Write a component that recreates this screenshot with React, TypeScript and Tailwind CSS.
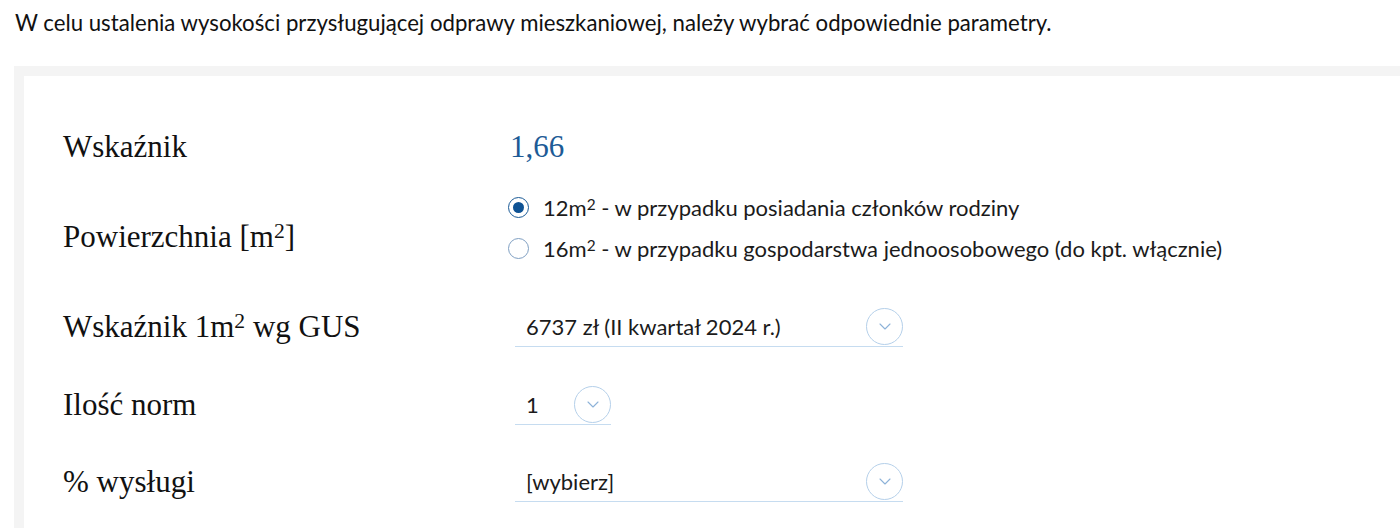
import React, { useState } from 'react';

const serif = { fontFamily: '"Liberation Serif", "DejaVu Serif", serif' };

const Chevron = () => (
  <span className="flex h-[37px] w-[37px] items-center justify-center rounded-full border border-[#b5d0ea] bg-white">
    <svg width="12" height="7" viewBox="0 0 12 7" fill="none">
      <path d="M1 1l5 5 5-5" stroke="#8db2d8" strokeWidth="1.1" strokeLinecap="round" strokeLinejoin="round" />
    </svg>
  </span>
);

const Select = ({ value, width }: { value: string; width: string }) => (
  <div className={`flex h-[40px] items-center justify-between border-b border-[#c6dcf0] pl-[11px] ${width}`}>
    <span className="text-[22px] text-[#1b1b1b]">{value}</span>
    <Chevron />
  </div>
);

const Radio = ({ checked, onClick, children }: { checked: boolean; onClick: () => void; children: React.ReactNode }) => (
  <button type="button" onClick={onClick} className="flex h-[41px] items-center gap-[14px] text-left">
    <span
      className={`flex h-[21px] w-[21px] items-center justify-center rounded-full border ${
        checked ? 'border-[#1a5a96]' : 'border-[#7f9fc2]'
      }`}
    >
      {checked && <span className="h-[11px] w-[11px] rounded-full bg-[#0e5294]" />}
    </span>
    <span className="text-[22px] text-[#1b1b1b]">{children}</span>
  </button>
);

const Label = ({ children, className = '' }: { children: React.ReactNode; className?: string }) => (
  <div className={`w-[447px] shrink-0 text-[31px] leading-[40px] text-[#111] ${className}`} style={serif}>
    {children}
  </div>
);

const Sq = () => <sup className="top-[-0.4em] text-[0.7em]">2</sup>;

export default function App() {
  const [area, setArea] = useState(12);

  return (
    <div className="h-[528px] overflow-hidden bg-white" style={{ fontFamily: 'Lato, "Liberation Sans", sans-serif' }}>
      <p className="pl-[15px] pt-[9px] text-[22.2px] leading-[28px] text-[#111]">
        W celu ustalenia wysokości przysługującej odprawy mieszkaniowej, należy wybrać odpowiednie parametry.
      </p>

      <div className="ml-[14px] mt-[29px] w-[1420px] bg-[#f4f4f4] pl-[10px] pt-[10px]">
        <div className="bg-white pb-[40px] pl-[39px] pt-[46px]">
          {/* wskaźnik */}
          <div className="flex h-[50px] items-center">
            <Label>Wskaźnik</Label>
            <span className="text-[31px] text-[#1d5b96]" style={serif}>
              1,66
            </span>
          </div>

          {/* powierzchnia */}
          <div className="mt-[15px] flex items-center">
            <Label className="pt-[17px]">
              Powierzchnia [m<Sq />]
            </Label>
            <div className="-ml-[2px] flex flex-col">
              <Radio checked={area === 12} onClick={() => setArea(12)}>
                12m<Sq /> - w przypadku posiadania członków rodziny
              </Radio>
              <Radio checked={area === 16} onClick={() => setArea(16)}>
                16m<Sq /> - w przypadku gospodarstwa jednoosobowego (do kpt. włącznie)
              </Radio>
            </div>
          </div>

          {/* selecty */}
          <div className="mt-[38px] flex items-center">
            <Label>
              Wskaźnik 1m<Sq /> wg GUS
            </Label>
            <div className="ml-[5px]">
              <Select value="6737 zł (II kwartał 2024 r.)" width="w-[388px]" />
            </div>
          </div>

          <div className="mt-[38px] flex items-center">
            <Label>Ilość norm</Label>
            <div className="ml-[5px]">
              <Select value="1" width="w-[96px]" />
            </div>
          </div>

          <div className="mt-[37px] flex items-center">
            <Label>% wysługi</Label>
            <div className="ml-[5px]">
              <Select value="[wybierz]" width="w-[388px]" />
            </div>
          </div>
        </div>
      </div>
    </div>
  );
}
